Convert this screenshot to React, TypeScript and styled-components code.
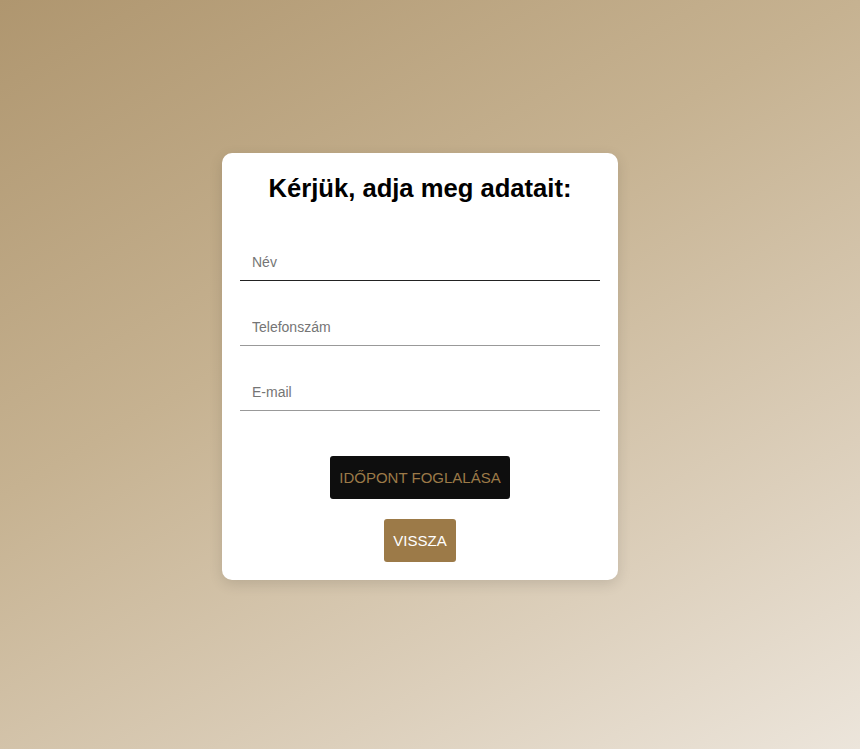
import React from "react";
import styled, { createGlobalStyle } from "styled-components";

const GlobalStyle = createGlobalStyle`
  * { box-sizing: border-box; }
  html, body { margin: 0; padding: 0; }
  body {
    font-family: "Liberation Sans", Arial, sans-serif;
    background: linear-gradient(150deg, #af966f 0%, #c6b291 40%, #dccfbb 75%, #ece5db 100%);
    min-height: 100vh;
  }
`;

const Page = styled.div`
  min-height: 100vh;
  display: flex;
  align-items: center;
  justify-content: center;
  padding: 0 20px 16px 0;
`;

const Card = styled.form`
  width: 396px;
  background: #ffffff;
  border-radius: 10px;
  box-shadow: 0 4px 14px rgba(0, 0, 0, 0.12);
  padding: 20px 18px 18px;
  display: flex;
  flex-direction: column;
`;

const Title = styled.h2`
  margin: 0 0 41px;
  font-size: 25.6px;
  line-height: 30px;
  font-weight: 700;
  color: #000;
  text-align: center;
`;

const Fields = styled.div`
  display: flex;
  flex-direction: column;
  gap: 28px;
`;

const Input = styled.input<{ $active?: boolean }>`
  display: block;
  width: 100%;
  height: 37px;
  border: none;
  border-bottom: 1px solid ${(p) => (p.$active ? "#222222" : "#999999")};
  padding: 9px 12px 10px;
  font-family: "Liberation Sans", Arial, sans-serif;
  font-size: 14px;
  line-height: 16px;
  color: #333;
  background: transparent;
  outline: none;
  &::placeholder {
    color: #757575;
  }
`;

const Actions = styled.div`
  margin-top: 45px;
  display: flex;
  flex-direction: column;
  align-items: center;
  gap: 20px;
`;

const Button = styled.button<{ $variant: "dark" | "brown" }>`
  border: none;
  border-radius: 3px;
  padding: 13px 9px;
  font-family: "Liberation Sans", Arial, sans-serif;
  font-size: 15px;
  line-height: 17px;
  text-transform: uppercase;
  cursor: pointer;
  background: ${(p) => (p.$variant === "dark" ? "#0e0e0e" : "#9c7a48")};
  color: ${(p) => (p.$variant === "dark" ? "#9c7a48" : "#ffffff")};
`;

export default function App() {
  return (
    <>
      <GlobalStyle />
      <Page>
        <Card onSubmit={(e) => e.preventDefault()}>
          <Title>Kérjük, adja meg adatait:</Title>
          <Fields>
            <Input $active placeholder="Név" />
            <Input placeholder="Telefonszám" />
            <Input placeholder="E-mail" />
          </Fields>
          <Actions>
            <Button type="submit" $variant="dark">Időpont foglalása</Button>
            <Button type="button" $variant="brown">Vissza</Button>
          </Actions>
        </Card>
      </Page>
    </>
  );
}
